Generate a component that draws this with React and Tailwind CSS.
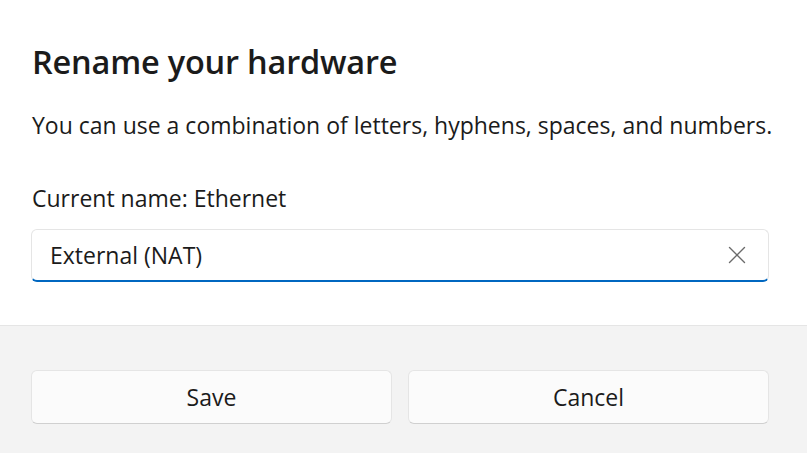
import { X } from 'lucide-react'

export default function App() {
  return (
    <div className="w-[807px] h-[453px] bg-white flex flex-col overflow-hidden" style={{ fontFamily: '"Open Sans", "Noto Sans", sans-serif' }}>
      {/* Body */}
      <div className="h-[325px] pl-[31px] pr-[38px] pt-[42px] flex flex-col">
        <h1 className="text-[32.5px] leading-[40px] font-semibold text-[#1b1b1b] pl-[1px] tracking-[-0.2px]">Rename your hardware</h1>
        <p className="mt-[28px] text-[23px] leading-[30px] text-[#1b1b1b] pl-[1px] whitespace-nowrap">
          You can use a combination of letters, hyphens, spaces, and numbers.
        </p>
        <p className="mt-[43px] text-[23px] leading-[30px] text-[#1b1b1b] pl-[1px]">Current name: Ethernet</p>
        <div className="mt-[16px] h-[53px] rounded-[6px] border border-[#e5e5e5] border-b-[2px] border-b-[#0067c0] bg-white flex items-center pl-[18px] pr-[16px]">
          <span className="flex-1 text-[23px] text-[#1b1b1b]">External (NAT)</span>
          <X size={30} strokeWidth={1.1} className="text-[#6b6b6b]" />
        </div>
      </div>

      {/* Footer */}
      <div className="flex-1 bg-[#f3f3f3] border-t border-[#e5e5e5] pl-[31px] pr-[38px] pt-[44px] flex gap-[16px]">
        <button className="flex-1 h-[54px] rounded-[6px] bg-[#fbfbfb] border border-[#e5e5e5] border-b-[#d0d0d0] text-[23px] text-[#1b1b1b]">
          Save
        </button>
        <button className="flex-1 h-[54px] rounded-[6px] bg-[#fbfbfb] border border-[#e5e5e5] border-b-[#d0d0d0] text-[23px] text-[#1b1b1b]">
          Cancel
        </button>
      </div>
    </div>
  )
}
